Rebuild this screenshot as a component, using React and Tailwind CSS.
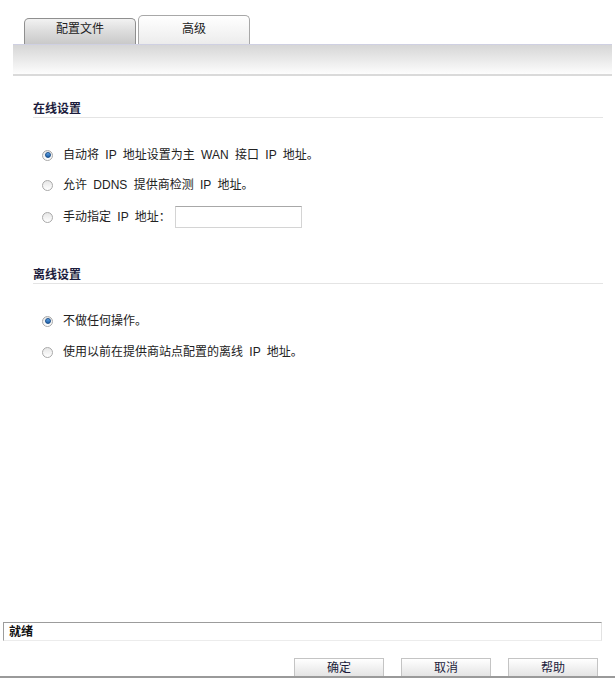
import React, { useState } from 'react';

const font = { fontFamily: '"Liberation Sans", "Noto Sans CJK SC", sans-serif' };

function Radio({ checked }) {
  return (
    <span className="inline-flex w-[11px] h-[11px] rounded-full border border-[#a9a9a9] bg-gradient-to-b from-[#e6e6e6] to-[#ffffff] items-center justify-center shrink-0">
      {checked && (
        <span className="w-[6px] h-[6px] rounded-full bg-gradient-to-b from-[#5fa4e6] to-[#1d5fa8] border border-[#1b4f8a]" />
      )}
    </span>
  );
}

function Option({ checked, children, onClick }) {
  return (
    <div className="flex items-center min-h-[20px] pl-[42px] cursor-pointer" onClick={onClick}>
      <Radio checked={checked} />
      <div className="pl-[10px] text-[12px] leading-[14px] text-[#222] flex items-center [word-spacing:3px]">
        {children}
      </div>
    </div>
  );
}

function SectionTitle({ children }) {
  return (
    <div className="ml-[33px] mr-[12px] border-b border-[#e4e4e4] pb-[1px]">
      <span className="block text-[12px] leading-[14px] font-bold text-[#1c1c3c]">{children}</span>
    </div>
  );
}

const tabActive =
  'w-[112px] h-[29px] pt-[6px] rounded-t-[5px] border border-b-0 border-[#a8a8a8] bg-gradient-to-b from-[#ffffff] to-[#ececec] flex justify-center text-[12px] leading-[14px] text-[#222] cursor-pointer';
const tabInactive =
  'w-[112px] h-[26px] pt-[3px] rounded-t-[5px] border border-b-0 border-[#8f8f8f] bg-gradient-to-b from-[#f2f2f2] via-[#dcdcdc] to-[#c9c9c9] flex justify-center text-[12px] leading-[14px] text-[#222] cursor-pointer';

export default function App() {
  const [tab, setTab] = useState(1);
  const [online, setOnline] = useState(0);
  const [offline, setOffline] = useState(0);

  return (
    <div className="w-[615px] h-[678px] bg-white flex flex-col overflow-hidden" style={font}>
      {/* tabs */}
      <div className="flex items-end pl-[24px] pt-[15px] gap-[2px] h-[44px]">
        <div onClick={() => setTab(0)} className={tab === 0 ? tabActive : tabInactive}>
          配置文件
        </div>
        <div onClick={() => setTab(1)} className={tab === 1 ? tabActive : tabInactive}>
          高级
        </div>
      </div>
      <div className="ml-[13px] mr-[3px] h-[32px] border-t border-[#cfd0e2] border-b-2 border-b-[#dadada] bg-gradient-to-b from-[#d6d6d6] to-[#fdfdfd]" />

      {/* online */}
      <div className="mt-[26px]">
        <SectionTitle>在线设置</SectionTitle>
      </div>
      <div className="mt-[27px] flex flex-col">
        <Option checked={online === 0} onClick={() => setOnline(0)}>
          自动将 IP 地址设置为主 WAN 接口 IP 地址。
        </Option>
        <div className="h-[10px]" />
        <Option checked={online === 1} onClick={() => setOnline(1)}>
          允许 DDNS 提供商检测 IP 地址。
        </Option>
        <div className="h-[11px]" />
        <Option checked={online === 2} onClick={() => setOnline(2)}>
          <span>手动指定 IP 地址：</span>
          <input
            type="text"
            className="ml-[4px] w-[127px] h-[22px] border border-[#d4d4d4] border-t-[#a8a8a8] outline-none px-1 text-[12px]"
          />
        </Option>
      </div>

      {/* offline */}
      <div className="mt-[40px]">
        <SectionTitle>离线设置</SectionTitle>
      </div>
      <div className="mt-[27px] flex flex-col">
        <Option checked={offline === 0} onClick={() => setOffline(0)}>
          不做任何操作。
        </Option>
        <div className="h-[11px]" />
        <Option checked={offline === 1} onClick={() => setOffline(1)}>
          使用以前在提供商站点配置的离线 IP 地址。
        </Option>
      </div>

      <div className="flex-1" />

      {/* status bar */}
      <div className="ml-[3px] mr-[13px] h-[19px] border-t border-l border-[#9c9c9c] border-r border-r-[#e2e2e2] border-b border-b-[#ececec] flex items-center pl-[5px]">
        <span className="text-[12px] font-bold text-[#111]">就绪</span>
      </div>

      {/* buttons */}
      <div className="mt-[17px] flex justify-end gap-[17px] pr-[17px] h-[18px] items-start">
        {['确定', '取消', '帮助'].map((label) => (
          <button
            key={label}
            className="w-[90px] h-[18px] border border-[#c4c4c4] border-b-0 bg-gradient-to-b from-[#ffffff] to-[#e4e4e4] text-[12px] text-[#1c1c3c] leading-[18px]"
          >
            {label}
          </button>
        ))}
      </div>
      <div className="h-[2px] bg-[#9a9a9a]" />
    </div>
  );
}
